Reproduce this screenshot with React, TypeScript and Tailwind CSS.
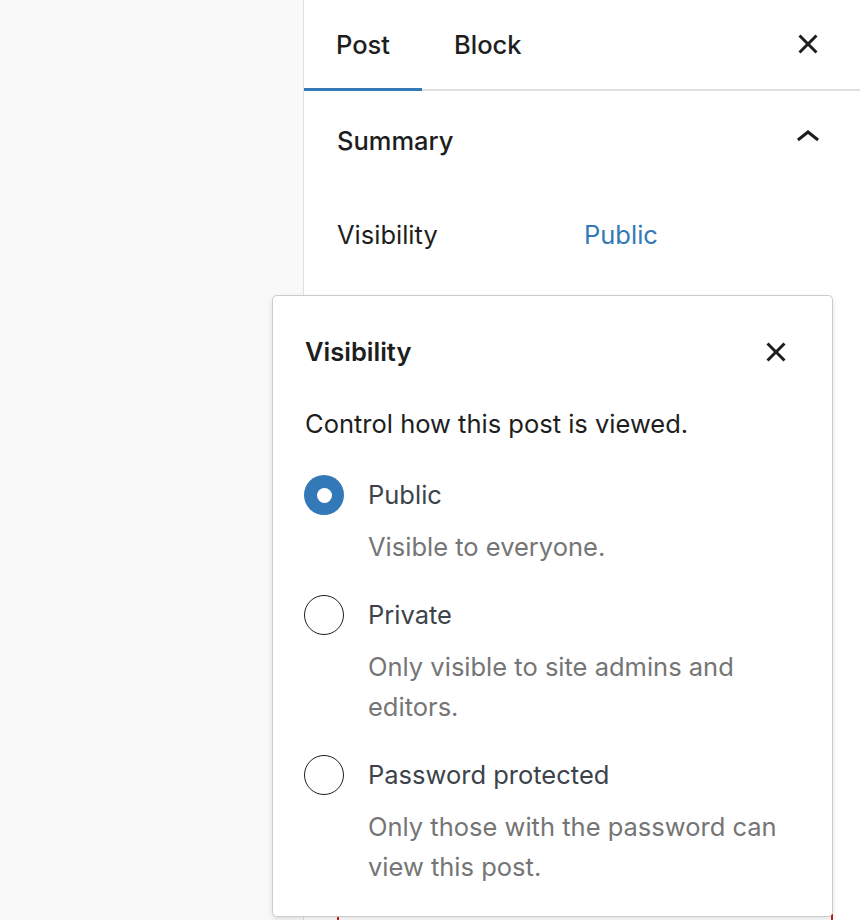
import React from "react";

const font = { fontFamily: "Inter, 'Noto Sans', sans-serif" };

function CloseSmall({ className }: { className?: string }) {
  return (
    <svg viewBox="0 0 24 24" className={className} fill="#1e1e1e">
      <path d="M12 13.06l3.712 3.713 1.061-1.06L13.061 12l3.712-3.712-1.06-1.06L12 10.938 8.288 7.227l-1.061 1.06L10.939 12l-3.712 3.712 1.06 1.061L12 13.061z" />
    </svg>
  );
}

function ChevronUp({ className }: { className?: string }) {
  return (
    <svg viewBox="0 0 24 24" className={className} fill="#1e1e1e">
      <path d="M6.5 12.4L12 8l5.5 4.4-.9 1.2L12 10l-4.6 3.6-.9-1.2z" />
    </svg>
  );
}

function Option({
  label,
  checked,
  children,
}: {
  label: string;
  checked?: boolean;
  children: React.ReactNode;
}) {
  return (
    <div className="flex flex-col">
      <div className="flex h-[40px] items-center">
        {checked ? (
          <div className="flex h-[40px] w-[40px] items-center justify-center rounded-full bg-[#3379b7]">
            <div className="h-[15px] w-[15px] rounded-full bg-white" />
          </div>
        ) : (
          <div className="h-[40px] w-[40px] rounded-full border-[1.5px] border-[#1e1e1e] bg-white" />
        )}
        <span className="ml-[24px] text-[25.5px] leading-[40px] text-[#3c434a]">{label}</span>
      </div>
      <div className="mt-[12px] pl-[64px] text-[25.5px] leading-[40px] text-[#757575]">{children}</div>
    </div>
  );
}

export default function App() {
  return (
    <div className="relative flex h-[920px] w-[860px] overflow-hidden bg-[#f9f9f9]" style={font}>
      <div className="w-[303px] shrink-0" />
      <div className="flex w-[557px] shrink-0 flex-col border-l border-[#e0e0e0] bg-white text-[#1e1e1e]">
        <div className="flex h-[91px] shrink-0 items-stretch border-b-[2px] border-[#e0e0e0]">
          <div className="relative flex items-center px-[32px] pt-[2px] text-[25.5px] font-medium">
            Post
            <div className="absolute bottom-[-2px] left-0 right-0 h-[3px] bg-[#3379b7]" />
          </div>
          <div className="flex items-center px-[32px] pt-[2px] text-[25.5px] font-medium">Block</div>
          <div className="flex-1" />
          <div className="mr-[28px] flex items-center pb-[2px]">
            <CloseSmall className="h-[48px] w-[48px]" />
          </div>
        </div>
        <div className="flex flex-col pl-[33px] pr-[28px]">
          <div className="mt-[26px] flex h-[48px] items-center justify-between">
            <span className="text-[25.5px] font-medium">Summary</span>
            <ChevronUp className="mt-[-7px] h-[48px] w-[48px]" />
          </div>
          <div className="mt-[46px] flex h-[48px] items-center">
            <span className="w-[247px] text-[25.5px]">Visibility</span>
            <span className="text-[25.5px] text-[#3379b7]">Public</span>
          </div>
          <div className="mt-[655px] h-[60px] w-[496px] border-x-[2px] border-[#cc1818]" />
        </div>
      </div>

      <div className="absolute left-[272px] top-[295px] w-[561px] rounded-[5px] border border-[#cccccc] bg-white pb-[29px] pl-[31px] pr-[32px] pt-[32px] shadow-[0_2px_5px_rgba(0,0,0,0.12)]">
        <div className="flex h-[48px] items-center justify-between">
          <span className="pl-[1px] text-[25.5px] font-semibold text-[#1e1e1e]">Visibility</span>
          <CloseSmall className="h-[48px] w-[48px]" />
        </div>
        <div className="mt-[28px] pl-[1px] text-[25.5px] leading-[40px] text-[#1e1e1e]">Control how this post is viewed.</div>
        <div className="mt-[31px] flex flex-col gap-[28px]">
          <Option label="Public" checked>
            Visible to everyone.
          </Option>
          <Option label="Private">
            Only visible to site admins and
            <br />
            editors.
          </Option>
          <Option label="Password protected">
            Only those with the password can
            <br />
            view this post.
          </Option>
        </div>
      </div>
    </div>
  );
}
